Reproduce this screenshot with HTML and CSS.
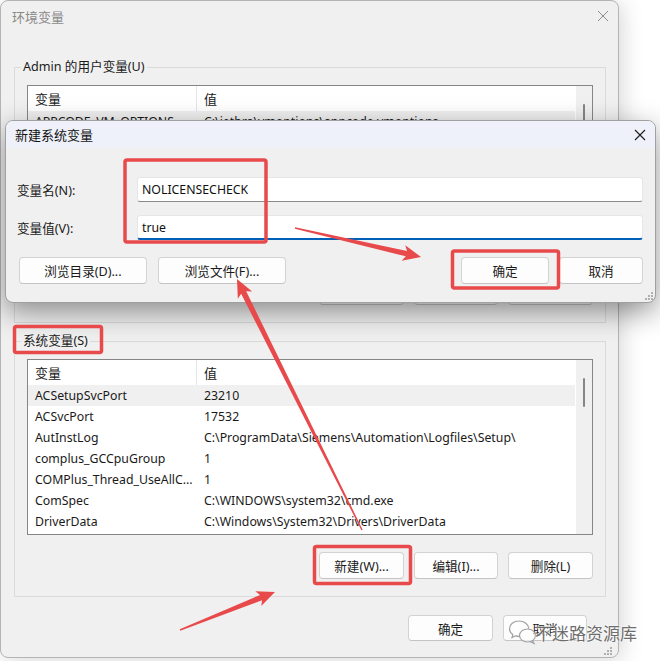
FILE: index.html
```html
<!DOCTYPE html>
<html lang="zh-CN">
<head>
<meta charset="utf-8">
<title>环境变量</title>
<link rel="stylesheet" href="styles.css">
</head>
<body>
<div class="window">
  <div class="titlebar">
    <span class="title">环境变量</span>
    <svg class="close" width="12" height="12" viewBox="0 0 12 12"><path d="M1 1L11 11M11 1L1 11"/></svg>
  </div>
  <div class="content">
    <fieldset class="group">
      <legend>Admin 的用户变量(U)</legend>
      <div class="list">
        <div class="rows">
          <div class="row head"><span class="c1">变量</span><span class="c2">值</span></div>
          <div class="row sel"><span class="c1">APPCODE_VM_OPTIONS</span><span class="c2">C:\jetbra\vmoptions\appcode.vmoptions</span></div>
          <div class="row"><span class="c1">CLION_VM_OPTIONS</span><span class="c2">C:\jetbra\vmoptions\clion.vmoptions</span></div>
          <div class="row"><span class="c1">DATAGRIP_VM_OPTIONS</span><span class="c2">C:\jetbra\vmoptions\datagrip.vmoptions</span></div>
          <div class="row"><span class="c1">DATASPELL_VM_OPTIONS</span><span class="c2">C:\jetbra\vmoptions\dataspell.vmoptions</span></div>
          <div class="row"><span class="c1">GATEWAY_VM_OPTIONS</span><span class="c2">C:\jetbra\vmoptions\gateway.vmoptions</span></div>
          <div class="row"><span class="c1">GOLAND_VM_OPTIONS</span><span class="c2">C:\jetbra\vmoptions\goland.vmoptions</span></div>
          <div class="row"><span class="c1">IDEA_VM_OPTIONS</span><span class="c2">C:\jetbra\vmoptions\idea.vmoptions</span></div>
        </div>
        <div class="scroll"><div class="thumb"></div></div>
      </div>
      <div class="btns">
        <button class="btn w85">新建(N)...</button>
        <button class="btn w84">编辑(E)...</button>
        <button class="btn w85">删除(D)</button>
      </div>
    </fieldset>
    <fieldset class="group">
      <legend>系统变量(S)</legend>
      <div class="list">
        <div class="rows">
          <div class="row head"><span class="c1">变量</span><span class="c2">值</span></div>
          <div class="row sel"><span class="c1">ACSetupSvcPort</span><span class="c2">23210</span></div>
          <div class="row"><span class="c1">ACSvcPort</span><span class="c2">17532</span></div>
          <div class="row"><span class="c1">AutInstLog</span><span class="c2">C:\ProgramData\Siemens\Automation\Logfiles\Setup\</span></div>
          <div class="row"><span class="c1">complus_GCCpuGroup</span><span class="c2">1</span></div>
          <div class="row"><span class="c1">COMPlus_Thread_UseAllC...</span><span class="c2">1</span></div>
          <div class="row"><span class="c1">ComSpec</span><span class="c2">C:\WINDOWS\system32\cmd.exe</span></div>
          <div class="row"><span class="c1">DriverData</span><span class="c2">C:\Windows\System32\Drivers\DriverData</span></div>
          <div class="row"><span class="c1">FPS_BROWSER_APP_PROFILE</span><span class="c2">Internet Explorer</span></div>
        </div>
        <div class="scroll"><div class="thumb"></div></div>
      </div>
      <div class="btns">
        <button class="btn w85">新建(W)...</button>
        <button class="btn w84">编辑(I)...</button>
        <button class="btn w85">删除(L)</button>
      </div>
    </fieldset>
  </div>
  <div class="footer">
    <button class="btn w85 h26">确定</button>
    <button class="btn w84 h26">取消</button>
  </div>
</div>

<div class="dialog">
  <div class="dtitle">
    <span>新建系统变量</span>
    <svg class="dclose" width="12" height="12" viewBox="0 0 12 12"><path d="M1 1L11 11M11 1L1 11"/></svg>
  </div>
  <div class="dbody">
    <div class="field">
      <label>变量名(N):</label>
      <div class="input">NOLICENSECHECK</div>
    </div>
    <div class="field">
      <label>变量值(V):</label>
      <div class="input focus">true</div>
    </div>
    <div class="dbtns">
      <div class="left">
        <button class="btn w128 h27">浏览目录(D)...</button>
        <button class="btn w128 h27">浏览文件(F)...</button>
      </div>
      <div class="right">
        <button class="btn w88 h27">确定</button>
        <button class="btn w84 h27">取消</button>
      </div>
    </div>
  </div>
  <svg class="grip" width="8" height="8" viewBox="0 0 8 8"><g fill="#b0b0b0"><rect x="6" y="0" width="2" height="2"/><rect x="3" y="3" width="2" height="2"/><rect x="6" y="3" width="2" height="2"/><rect x="0" y="6" width="2" height="2"/><rect x="3" y="6" width="2" height="2"/><rect x="6" y="6" width="2" height="2"/></g></svg>
</div>

<svg class="wgrip" width="8" height="8" viewBox="0 0 8 8"><g fill="#b0b0b0"><rect x="6" y="0" width="2" height="2"/><rect x="3" y="3" width="2" height="2"/><rect x="6" y="3" width="2" height="2"/><rect x="0" y="6" width="2" height="2"/><rect x="3" y="6" width="2" height="2"/><rect x="6" y="6" width="2" height="2"/></g></svg>

<div class="watermark">
  <svg class="wx" width="30" height="26" viewBox="0 0 30 26">
    <path d="M11 2C5.5 2 1.5 5.6 1.5 9.8c0 2.4 1.3 4.4 3.3 5.8L4 18.6l3.4-1.8c1.1.3 2.3.5 3.6.5 .4 0 .8 0 1.2-.1" fill="rgba(255,255,255,.6)" stroke="#a0a0a0" stroke-width="1.2"/>
    <path d="M11 2c5.3 0 9.6 3.4 9.9 7.6" fill="none" stroke="#a0a0a0" stroke-width="1.2"/>
    <ellipse cx="19.5" cy="16.5" rx="8" ry="6.5" fill="rgba(255,255,255,.6)" stroke="#a0a0a0" stroke-width="1.2"/>
    <path d="M24.5 21.5l1.5 3-3.5-1.8" fill="none" stroke="#a0a0a0" stroke-width="1.2"/>
  </svg>
  <span class="wtext">不迷路资源库</span>
</div>

<svg class="annot" width="660" height="661" viewBox="0 0 660 661">
  <g fill="none" stroke="#e84a4c" stroke-width="3.5" stroke-linejoin="round">
    <rect x="125" y="160" width="141" height="82" rx="2"/>
    <rect x="452.5" y="251" width="106" height="37" rx="2"/>
    <rect x="14.5" y="326.5" width="87" height="26" rx="2"/>
    <rect x="314.5" y="546.5" width="96" height="37" rx="2"/>
  </g>
  <g fill="#e84a4c">
    <path transform="translate(295 228) rotate(12.96)" d="M0 -0.7L114.3 -2.8L111.3 -8L129.3 0L111.3 8L114.3 2.8L0 0.7Z"/>
    <path transform="translate(362 530) rotate(-116.48)" d="M0 -0.7L265.4 -2.8L262.4 -8L280.4 0L262.4 8L265.4 2.8L0 0.7Z"/>
    <path transform="translate(180 630) rotate(-21.8)" d="M0 -0.7L87.3 -2.8L84.3 -8L102.3 0L84.3 8L87.3 2.8L0 0.7Z"/>
  </g>
</svg>
</body>
</html>
```

FILE: styles.css
```css
* { box-sizing: border-box; }

body {
  margin: 0;
  width: 660px;
  height: 661px;
  overflow: hidden;
  background: #ffffff;
  position: relative;
  font-family: "Noto Sans", "Noto Sans CJK SC", sans-serif;
  font-size: 13px;
  color: #1a1a1a;
}

.window {
  width: 619px;
  height: 658px;
  background: #f0f0f0;
  border: 1px solid #b4b4b4;
  border-radius: 8px;
  box-shadow: 3px 2px 22px rgba(0, 0, 0, 0.16);
  display: flex;
  flex-direction: column;
}

.titlebar {
  height: 30px;
  display: flex;
  align-items: center;
  justify-content: space-between;
  padding: 0 9px 0 11px;
}

.title { color: #8a8a8a; }

.close path { stroke: #8c8c8c; stroke-width: 1; fill: none; }

.content {
  padding: 27px 12px 0 13px;
}

.group {
  margin: 0;
  padding: 9px 12px 17px;
  border: 1px solid #dadada;
  width: 592px;
  min-width: 0;
}

.group legend {
  padding: 0 2px;
  margin-left: -6px;
  line-height: 18px;
  font-size: 12.6px;
}

.group + .group { margin-top: 9px; }

.list {
  height: 176px;
  border: 1px solid #868686;
  background: #ffffff;
  display: flex;
}

.rows {
  flex: 1;
  overflow: hidden;
}

.row {
  display: flex;
  height: 21px;
  align-items: center;
  white-space: nowrap;
  font-size: 12.3px;
}

.row.head { height: 25px; align-items: stretch; font-size: 13px; }

.row.sel { background: #f0f0f0; }

.c1 {
  width: 169px;
  flex: none;
  padding-left: 7px;
  overflow: hidden;
}

.c2 { padding-left: 7px; }

.head .c1, .head .c2 {
  display: flex;
  align-items: center;
}

.head .c1 { border-right: 1px solid #e5e5e5; }

.scroll {
  width: 17px;
  flex: none;
  background: #f0f0f0;
  border-left: 1px solid #ffffff;
}

.thumb {
  width: 2px;
  height: 29px;
  margin: 18px 0 0 7px;
  background: #868686;
  border-radius: 1px;
}

.btns {
  display: flex;
  justify-content: flex-end;
  gap: 10px;
  margin-top: 17px;
}

.btn {
  height: 27px;
  background: #fdfdfd;
  border: 1px solid #d3d3d3;
  border-bottom-color: #c4c4c4;
  border-radius: 4px;
  font-family: inherit;
  font-size: 12.6px;
  color: #1a1a1a;
  padding: 0;
}

.w84 { width: 84px; }
.w85 { width: 85px; }
.w88 { width: 88px; }
.w128 { width: 128px; }
.h26 { height: 26px; }
.h27 { height: 27px; }

.footer {
  display: flex;
  justify-content: flex-end;
  gap: 10px;
  padding: 18px 31px 0 0;
}

.dialog {
  position: absolute;
  left: 5px;
  top: 120px;
  width: 651px;
  height: 183px;
  background: #f0f0f0;
  border: 1px solid #a0a0a0;
  border-radius: 8px;
  box-shadow: 0 9px 28px rgba(0, 0, 0, 0.42);
  overflow: hidden;
  display: flex;
  flex-direction: column;
}

.dtitle {
  height: 27px;
  flex: none;
  background: #eef1f9;
  display: flex;
  align-items: center;
  justify-content: space-between;
  padding: 0 9px 0 9px;
  color: #111;
}

.dclose path { stroke: #1a1a1a; stroke-width: 1.1; fill: none; }

.dbody {
  padding: 29px 12px 0 11px;
  display: flex;
  flex-direction: column;
  gap: 13px;
}

.field {
  display: flex;
  align-items: center;
}

.field label {
  width: 120px;
  flex: none;
  font-size: 12.6px;
}

.input {
  width: 506px;
  height: 25px;
  background: #ffffff;
  border: 1px solid #e6e6e6;
  border-bottom: 1px solid #8a8a8a;
  border-radius: 3px;
  padding-left: 4px;
  display: flex;
  align-items: center;
  color: #111;
  font-size: 12.3px;
}

.input.focus {
  border-bottom: 2px solid #005fb8;
}

.dbtns {
  display: flex;
  justify-content: space-between;
  margin-top: 4px;
  padding-left: 2px;
}

.dbtns .left, .dbtns .right {
  display: flex;
  gap: 10px;
}

.dbtns .left { gap: 11px; }

.grip {
  position: absolute;
  right: 2px;
  bottom: 2px;
}

.wgrip {
  position: absolute;
  left: 604px;
  top: 647px;
}

.watermark {
  position: absolute;
  left: 508px;
  top: 619px;
  display: flex;
  align-items: center;
}

.wtext {
  font-family: "Noto Sans CJK SC", sans-serif;
  font-size: 17px;
  color: #6e6e6e;
  margin-left: -3px;
  text-shadow: 0 0 2px #fff, 0 0 2px #fff;
}

.annot {
  position: absolute;
  left: 0;
  top: 0;
  pointer-events: none;
}
```
